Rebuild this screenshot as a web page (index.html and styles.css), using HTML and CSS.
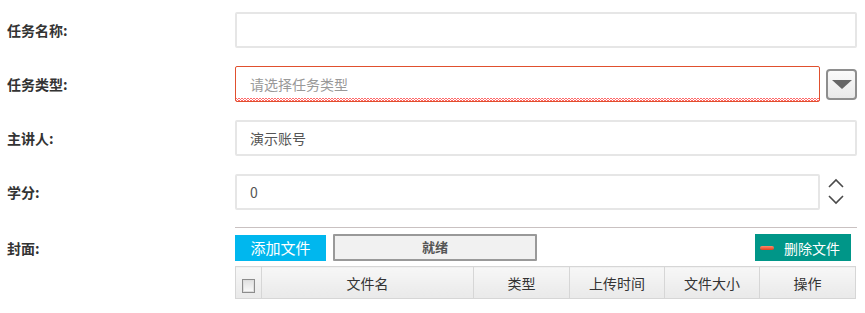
FILE: index.html
```html
<!DOCTYPE html>
<html lang="zh-CN">
<head>
    <meta charset="UTF-8">
    <title>任务</title>
    <link rel="stylesheet" href="styles.css">
</head>
<body>
    <div class="task-form">
        <!-- 任务名称 -->
        <div class="row">
            <label class="label">任务名称:</label>
            <div class="field">
                <div class="input"></div>
            </div>
        </div>

        <!-- 任务类型 -->
        <div class="row">
            <label class="label">任务类型:</label>
            <div class="field">
                <div class="input input-error"><span class="placeholder">请选择任务类型</span></div>
                <div class="side">
                    <span class="drop-btn"><span class="triangle"></span></span>
                </div>
            </div>
        </div>

        <!-- 主讲人 -->
        <div class="row">
            <label class="label">主讲人:</label>
            <div class="field">
                <div class="input">演示账号</div>
            </div>
        </div>

        <!-- 学分 -->
        <div class="row">
            <label class="label">学分:</label>
            <div class="field">
                <div class="input">0</div>
                <div class="side">
                    <svg class="spinner" width="20" height="30" viewBox="0 0 20 30">
                        <polyline points="2,10 9,3 16,10" fill="none" stroke="#4a4a4a" stroke-width="1.6"/>
                        <polyline points="2,19 9,26 16,19" fill="none" stroke="#4a4a4a" stroke-width="1.6"/>
                    </svg>
                </div>
            </div>
        </div>

        <!-- 封面 -->
        <div class="row row-cover">
            <label class="label">封面:</label>
            <div class="uploader">
                <div class="toolbar">
                    <button class="btn btn-add">添加文件</button>
                    <div class="status">就绪</div>
                    <button class="btn btn-del"><span class="minus"></span>删除文件</button>
                </div>
                <table class="file-table">
                    <thead>
                        <tr>
                            <th class="col-check"><span class="checkbox"></span></th>
                            <th class="col-name">文件名</th>
                            <th class="col-type">类型</th>
                            <th class="col-time">上传时间</th>
                            <th class="col-size">文件大小</th>
                            <th>操作</th>
                        </tr>
                    </thead>
                </table>
            </div>
        </div>
    </div>
</body>
</html>
```

FILE: styles.css
```css
:root {
    --text-color: #333;
    --value-color: #555;
    --muted-color: #999;
    --input-border: #e6e6e6;
    --error-color: #e0502e;
    --blue: #00b7ee;
    --teal: #009688;
}

body {
    margin: 0;
    font-family: "Microsoft YaHei", "Noto Sans CJK SC", "Liberation Sans", sans-serif;
    font-size: 14px;
    color: var(--text-color);
    background: #fff;
}

.task-form {
    display: flex;
    flex-direction: column;
    gap: 18px;
    padding: 12px 0 0 7px;
    width: 850px;
}

.row {
    display: flex;
    align-items: center;
    height: 36px;
}

.label {
    width: 228px;
    flex: none;
    font-weight: bold;
    font-size: 14px;
}

.field {
    display: flex;
    align-items: center;
    width: 622px;
}

.input {
    flex: 1;
    height: 36px;
    box-sizing: border-box;
    border: 2px solid var(--input-border);
    border-radius: 2px;
    padding: 0 13px;
    line-height: 32px;
    color: var(--value-color);
    position: relative;
}

.input-error {
    border: 1px solid var(--error-color);
    padding: 0 13px 0 14px;
    line-height: 34px;
}

/* spell-check squiggle along the bottom */
.input-error::after {
    content: "";
    position: absolute;
    left: 0;
    right: 0;
    bottom: 0;
    height: 3px;
    background:
        linear-gradient(135deg, transparent 45%, #ff6b6b 45%, #ff6b6b 60%, transparent 60%) 0 0 / 3px 3px repeat-x,
        linear-gradient(45deg, transparent 45%, #ff6b6b 45%, #ff6b6b 60%, transparent 60%) 0 0 / 3px 3px repeat-x;
}

.placeholder {
    color: var(--muted-color);
}

.side {
    width: 37px;
    flex: none;
    display: flex;
    align-items: center;
    justify-content: flex-end;
}

.drop-btn {
    width: 27px;
    height: 27px;
    border: 2px solid #8e8e8e;
    border-radius: 4px;
    background: linear-gradient(#fafafa, #e9e9e9);
    display: flex;
    align-items: center;
    justify-content: center;
}

.triangle {
    width: 0;
    height: 0;
    border-left: 10px solid transparent;
    border-right: 10px solid transparent;
    border-top: 9px solid #666;
    margin-top: 1px;
}

.spinner {
    margin-right: 10px;
}

.row-cover {
    height: auto;
    align-items: flex-start;
    margin-top: -1px;
}

.row-cover .label {
    margin-top: 11px;
}

.uploader {
    width: 622px;
    border-top: 1px solid #c9c1c1;
    padding-top: 6px;
}

.toolbar {
    display: flex;
    align-items: center;
    height: 27px;
}

.btn {
    font-family: inherit;
    font-size: 14px;
    color: #fff;
    border: none;
    height: 27px;
    padding: 0;
    cursor: pointer;
}

.btn-add {
    width: 91px;
    height: 26px;
    font-size: 15px;
    background: var(--blue);
}

.status {
    width: 200px;
    height: 23px;
    margin-left: 7px;
    border: 2px solid #999;
    border-radius: 1px;
    background: #f1f1f1;
    text-align: center;
    line-height: 22px;
    font-size: 13px;
    font-weight: bold;
    color: #555;
}

.btn-del {
    margin-left: auto;
    margin-right: 6px;
    width: 96px;
    background: var(--teal);
    display: flex;
    align-items: center;
    padding-left: 5px;
    gap: 10px;
}

.minus {
    width: 14px;
    height: 4px;
    border-radius: 2px;
    background: linear-gradient(#ff8a6a, #e0401e);
}

.file-table {
    margin-top: 5px;
    width: 621px;
    border-collapse: collapse;
    table-layout: fixed;
}

.file-table th {
    height: 32px;
    box-sizing: border-box;
    padding: 0;
    border: 1px solid #d6d6d6;
    background: linear-gradient(#f7f7f7, #e9e9e9);
    font-weight: normal;
    font-size: 14px;
    color: #333;
    text-align: center;
}

.col-check { width: 26px; }
.col-name { width: 212px; }
.col-type { width: 96px; }
.col-time { width: 95px; }
.col-size { width: 95px; }

.checkbox {
    display: inline-block;
    width: 11px;
    height: 12px;
    margin-top: 10px;
    border: 1px solid #8c8c8c;
    background: linear-gradient(#e0e0e0, #fafafa);
    box-shadow: inset 0 0 0 1px #ddd;
}
```
